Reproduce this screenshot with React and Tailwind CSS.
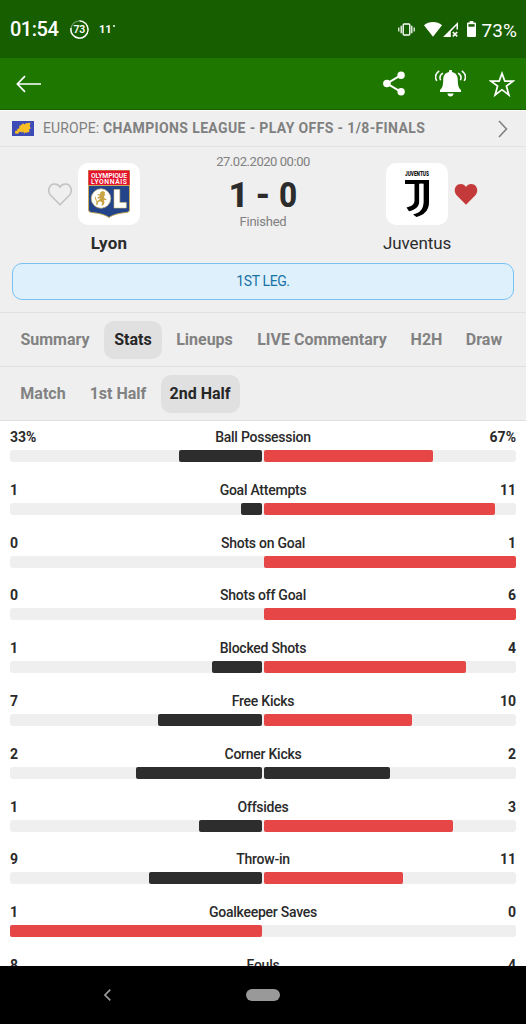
const TABS = [
  { label: 'Summary', box: 'w-[89px]' },
  { label: 'Stats', box: 'w-[58px]', active: true },
  { label: 'Lineups', box: 'w-[76px]' },
  { label: 'LIVE Commentary', box: 'w-[150px]' },
  { label: 'H2H', box: 'w-[50px]' },
  { label: 'Draw', box: 'w-[56px]' },
];

const PERIODS = [
  { label: 'Match', box: 'w-[65px]' },
  { label: '1st Half', box: 'w-[76px]' },
  { label: '2nd Half', box: 'w-[79px]', active: true },
];

const STATS = [
  { label: 'Ball Possession', home: 33, away: 67, unit: '%' },
  { label: 'Goal Attempts', home: 1, away: 11 },
  { label: 'Shots on Goal', home: 0, away: 1 },
  { label: 'Shots off Goal', home: 0, away: 6 },
  { label: 'Blocked Shots', home: 1, away: 4 },
  { label: 'Free Kicks', home: 7, away: 10 },
  { label: 'Corner Kicks', home: 2, away: 2 },
  { label: 'Offsides', home: 1, away: 3 },
  { label: 'Throw-in', home: 9, away: 11 },
  { label: 'Goalkeeper Saves', home: 1, away: 0 },
  { label: 'Fouls', home: 8, away: 4 },
];

function StatusBar() {
  return (
    <div className="h-[58px] shrink-0 bg-[#165e00] flex items-center text-white pl-[10px] pr-[9px]">
      <span className="w-[60px] text-[20px] leading-none font-medium tracking-[-0.5px]">01:54</span>
      <svg className="w-[19px] h-[19px]" viewBox="0 0 19 19" fill="none">
        <circle cx="9.5" cy="9.5" r="8.6" stroke="#fff" strokeOpacity="0.4" strokeWidth="1.1" />
        <path d="M9.5 .9A8.6 8.6 0 1 1 1 8" stroke="#fff" strokeWidth="1.4" />
        <text x="9.3" y="13.2" textAnchor="middle" fill="#fff" fontSize="10.5" fontWeight="600" letterSpacing="-0.3">73</text>
      </svg>
      <span className="ml-[10px] flex items-start text-[11px] leading-none font-bold">
        11
        <span className="ml-px mt-[1px] w-[2px] h-[2px] rounded-full bg-white" />
      </span>

      <div className="ml-auto flex items-center">
        {/* 진동 모드 */}
        <svg className="w-[17px] h-[13px]" viewBox="0 0 17 13" fill="none" stroke="#fff">
          <rect x="5.2" y="1" width="6.6" height="11" rx="1" strokeWidth="1.4" />
          <path d="M3.2 2.8v7.4M13.8 2.8v7.4" strokeWidth="1.3" />
          <path d="M.8 4.6v3.8M16.2 4.6v3.8" strokeWidth="1.2" />
        </svg>
        <svg className="ml-[9px] w-[18px] h-[15px]" viewBox="0 0 18 15" fill="#fff">
          <path d="M0 3.3C5-1.1 13-1.1 18 3.3L9 14.8z" />
        </svg>
        <svg className="ml-[1.5px] w-[16px] h-[15px]" viewBox="0 0 16 15" fill="#fff">
          <path d="M0 15 15 0v7.5h-1.5V3.6L7.8 9.4V15z" />
          <path d="m9.8 10 4.4 4.4M14.2 10l-4.4 4.4" stroke="#fff" strokeWidth="1.7" />
        </svg>
        <svg className="ml-[8px] w-[9px] h-[16px]" viewBox="0 0 9 16">
          <path d="M2.7 0h3.6v1.6H8q1 0 1 1V15q0 1-1 1H1q-1 0-1-1V2.6q0-1 1-1h1.7z" fill="#fff" />
          <path d="M1.4 3.2h6.2v2.5H1.4z" fill="#165e00" />
        </svg>
        <span className="ml-[5px] mt-[2px] text-[19px] leading-none tracking-[0.1px]">73%</span>
      </div>
    </div>
  );
}

function ActionBar() {
  return (
    <div className="h-[52px] shrink-0 bg-[#1e7800] border-b border-[#166000] flex items-center pl-4 pr-[11px]">
      <button aria-label="Back">
        <svg className="w-[25px] h-[18px]" viewBox="0 0 25 18" fill="none" stroke="#fff" strokeWidth="1.7">
          <path d="M25 9H1.4M9 1.2 1.4 9 9 16.8" />
        </svg>
      </button>
      <div className="ml-auto flex items-center">
        <button aria-label="Share">
          <svg className="w-[22px] h-[25px]" viewBox="0 0 22 25" fill="#fff">
            <path d="M18 4.2 4 12.5l14 8.3" fill="none" stroke="#fff" strokeWidth="2" />
            <circle cx="18.1" cy="4.2" r="3.7" />
            <circle cx="3.9" cy="12.5" r="3.8" />
            <circle cx="18.1" cy="20.8" r="3.7" />
          </svg>
        </button>
        <button aria-label="Notifications" className="ml-[30px]">
          <svg className="w-[31px] h-[27px]" viewBox="0 0 31 27" fill="#fff">
            <path d="M14 2V1.3a1.5 1.5 0 0 1 3 0V2c4 .8 5.8 4 5.8 7.5 0 6.5 1 8.5 3.2 10.5v2H5v-2c2.2-2 3.2-4 3.2-10.5C8.2 6 10 2.8 14 2z" />
            <path d="M12.4 23.6h6.2c-.3 2-1.5 3-3.1 3s-2.8-1-3.100-3z" />
            <g fill="none" stroke="#fff" strokeWidth="1.5">
              <path d="M4.2.8C.3 3.5-.2 7.5 1.8 11M8 3.2c-3 1.8-3.6 4.5-2.4 7" />
              <path d="M26.8.8c3.9 2.7 4.4 6.7 2.4 10.2M23 3.2c3 1.8 3.6 4.5 2.4 7" />
            </g>
          </svg>
        </button>
        <button aria-label="Favourite" className="ml-[23px]">
          <svg className="w-[26px] h-[26px]" viewBox="0 0 26 26" fill="none" stroke="#fff" strokeWidth="1.7">
            <path d="m13 2.4 2.8 7.7h8.3l-6.7 5 2.5 8.9-6.9-5.3L6.1 24l2.5-8.9-6.7-5h8.3z" />
          </svg>
        </button>
      </div>
    </div>
  );
}

function LeagueRow() {
  return (
    <div className="h-[37px] shrink-0 border-t border-t-white border-b border-b-[#e3e3e3] flex items-center pl-3 pr-[18px] text-[14px] text-[#808080]">
      <svg className="w-[22px] h-[15px]" viewBox="0 0 22 15">
        <rect width="22" height="15" fill="#3c4bb5" />
        <path d="M3 12.5 3.2 10l2.3-.5L5 8l2-.5.5-1.5L7 4.500l1.500.3L10 3l1.500-.5 1 1L14 2.300l4.500-.6-.8 3 1 2.800-1.700 1 .5 2.500-2 .2-1 .8-1.200-.7-.8 1.400-1.200-2-1-.5.7 2-1.500-1.200-1-.2-1.500.4-.8 1.500z" fill="#fbbf24" />
      </svg>
      <span className="ml-[9px] tracking-[0.12px] whitespace-nowrap">
        EUROPE: <b className="font-bold tracking-[0.37px]">CHAMPIONS LEAGUE - PLAY OFFS - 1/8-FINALS</b>
      </span>
      <svg className="ml-auto w-[10px] h-[18px]" viewBox="0 0 10 18" fill="none" stroke="#808080" strokeWidth="1.6">
        <path d="m1 1 7.5 8L1 17" />
      </svg>
    </div>
  );
}

function LyonCrest() {
  return (
    <svg className="w-[42px] h-[48px]" viewBox="0 0 42 48">
      <path d="M.5.5h41V40q0 2-3 2.500-12 1-17.500 5Q15.500 43.500 3.500 42.500.5 42 .5 40z" fill="#234489" stroke="#c8ab5c" />
      <path d="M.5.5h41V15H.5z" fill="#e2132b" />
      <path d="M.5 15.500h41" stroke="#c8ab5c" />
      <text x="21" y="7.5" textAnchor="middle" textLength="36" fill="#fff" fontSize="6.8" fontWeight="600">OLYMPIQUE</text>
      <text x="21" y="13.8" textAnchor="middle" textLength="36" fill="#fff" fontSize="6.8" fontWeight="600">LYONNAIS</text>
      <circle cx="13" cy="28.5" r="9.7" fill="#fff" stroke="#d8c078" strokeWidth=".7" />
      {/* 사자 */}
      <path d="m12.500 22 2.500-1 2.200 1.500-.7 1.500 1 1-1.500 1 .5 2.500 2 .5-.3 1.300-2.400-.2.800 2.200-1.200 3-2 .3.800-2.800-2-1.500-2.200 1-.2 2.300-1.800.4.500-3.500 2.500-1.500 1.300-2-2.300.8-1-1 1.700-.8 1.300-1.500-2.300-.2-.2-1.200 2.500.2zM8.200 31.500l-1.500-3.500.8-2 .5 2.500 1 2.500z" fill="#c9a443" />
      <path d="M26 19.500h5.800v13h6.500V38H26z" fill="#fff" stroke="#d8c078" strokeWidth=".6" />
    </svg>
  );
}

function JuventusCrest() {
  return (
    <svg className="w-[24px] h-[48px] overflow-visible" viewBox="0 0 24 48">
      <text x="12" y="5.8" textAnchor="middle" textLength="24" lengthAdjust="spacingAndGlyphs" fill="#111" fontSize="7" fontWeight="900">JUVENTUS</text>
      <path d="M0 10h14.200v21.500c0 5.500-4.500 8.500-10.200 9.800L1.500 37.500C6 36.500 9.500 34.500 9.500 30.500V14H0z" />
      <path d="M18.500 10H24v22.500c0 9-6.500 13-12.500 14.500L8 44.500c6.500-1.500 10.500-5 10.500-12z" />
      <path d="M0 10h24v3.800H0z" />
      <path d="M14.600 13.800h3.700v18c0 5-3.300 9-9.300 11l-2-1c5.500-2 7.600-5.500 7.600-10z" fill="#fff" />
    </svg>
  );
}

const HEART = 'M12 21.7 2.6 12.2C-1.3 7.5 1.4 1 6.600 1 9 1 10.900 2.200 12 4c1.100-1.800 3-3 5.400-3 5.200 0 7.900 6.500 4 11.200z';

function MatchHeader() {
  return (
    <div className="h-[166px] shrink-0 border-b border-[#e0e0e0] px-3">
      <div className="h-[116px] flex">
        <div className="flex items-start pt-4 w-[180px]">
          <svg className="ml-9 mt-[20px] w-[24px] h-[23px] shrink-0" viewBox="0 0 24 23" fill="none" stroke="#c2c2c2" strokeWidth="1.5">
            <path d={HEART} />
          </svg>
          <div className="ml-[6px] w-[62px]">
            <div className="w-[62px] h-[62px] rounded-[10px] bg-white flex items-center justify-center">
              <LyonCrest />
            </div>
            <div className="mt-[7px] text-[17px] leading-[22px] tracking-[0.2px] text-center font-bold text-[#2c2c2c]">Lyon</div>
          </div>
        </div>
        <div className="w-[142px] flex flex-col items-center text-[#808080]">
          <div className="mt-[7px] text-[13px] leading-4 tracking-[-0.45px]">27.02.2020 00:00</div>
          <div className="mt-[8px] text-[35px] leading-[36px] font-extrabold text-[#2c2c2c] flex justify-between w-[69px]">
            <span>1</span>
            <span>-</span>
            <span className="origin-right scale-x-90">0</span>
          </div>
          <div className="text-[13px] leading-4 tracking-[-0.25px]">Finished</div>
        </div>
        <div className="flex items-start pt-4 w-[180px]">
          <div className="ml-[52px] w-[62px]">
            <div className="w-[62px] h-[62px] rounded-[10px] bg-white flex items-center justify-center">
              <JuventusCrest />
            </div>
            <div className="mt-[7px] text-[17px] leading-[22px] tracking-[-0.1px] flex justify-center text-[#2c2c2c]">Juventus</div>
          </div>
          <svg className="ml-[6px] mt-[20px] w-[24px] h-[23px] shrink-0" viewBox="0 0 24 23" fill="#c43a3b">
            <path d={HEART} />
          </svg>
        </div>
      </div>
      <div className="h-[37px] rounded-[10px] border border-[#76c3f2] bg-[#def0fc] flex items-center justify-center text-[14px] tracking-[-0.4px] text-[#1872a4]">
        1ST LEG.
      </div>
    </div>
  );
}

function TabRow({ items }) {
  return (
    <div className="h-[54px] shrink-0 border-b border-[#e0e0e0] flex items-center gap-[4.5px] pl-[10.5px] text-[16px] font-bold whitespace-nowrap">
      {items.map((t) => (
        <button
          key={t.label}
          className={`h-[38px] shrink-0 rounded-[10px] flex items-center justify-center ${t.box}
            ${t.active ? 'bg-[#e0e0e0] text-[#262626]' : 'text-[#828282]'}`}
        >
          {t.label}
        </button>
      ))}
    </div>
  );
}

function StatRow({ label, home, away, unit = '' }) {
  const total = home + away;
  const homeColor = home > away ? 'bg-[#e64646]' : 'bg-[#2d2d2d]';
  const awayColor = away > home ? 'bg-[#e64646]' : 'bg-[#2d2d2d]';

  return (
    <div className="h-[52.8px] shrink-0 px-[10px] pt-[7px] text-[14px] leading-[18px] text-[#2a2a2a]">
      <div className="h-[22px] flex justify-between">
        <span className="w-16 font-bold">{home}{unit}</span>
        <span className="font-medium tracking-[-0.25px]">{label}</span>
        <span className="w-16 text-right font-bold">{away}{unit}</span>
      </div>
      <div className="h-[12px] rounded-[3px] bg-[#efefef] flex gap-[2px]">
        <div className="flex-1 flex justify-end">
          <div className={`rounded-[2px] ${homeColor}`} style={{ width: `${(home / total) * 100}%` }} />
        </div>
        <div className="flex-1 flex">
          <div className={`rounded-[2px] ${awayColor}`} style={{ width: `${(away / total) * 100}%` }} />
        </div>
      </div>
    </div>
  );
}

export default function App() {
  return (
    <div className="w-[526px] h-[1024px] overflow-hidden flex flex-col bg-[#efefef] font-['Roboto',sans-serif]">
      <StatusBar />
      <ActionBar />
      <LeagueRow />
      <MatchHeader />
      <TabRow items={TABS} />
      <TabRow items={PERIODS} />

      {/* 통계 목록 */}
      <div className="flex-1 min-h-0 overflow-hidden bg-white flex flex-col">
        {STATS.map((s) => (
          <StatRow key={s.label} {...s} />
        ))}
      </div>

      {/* 시스템 내비게이션 바 */}
      <div className="h-[58px] shrink-0 bg-black flex items-center justify-center">
        <svg className="w-[7px] h-[12px] mr-[135px]" viewBox="0 0 7 12" fill="none" stroke="#999" strokeWidth="1.7">
          <path d="M6.3.6 1 6l5.3 5.4" />
        </svg>
        <div className="w-[34px] h-[12px] mr-[142px] rounded-full bg-[#999]" />
      </div>
    </div>
  );
}
